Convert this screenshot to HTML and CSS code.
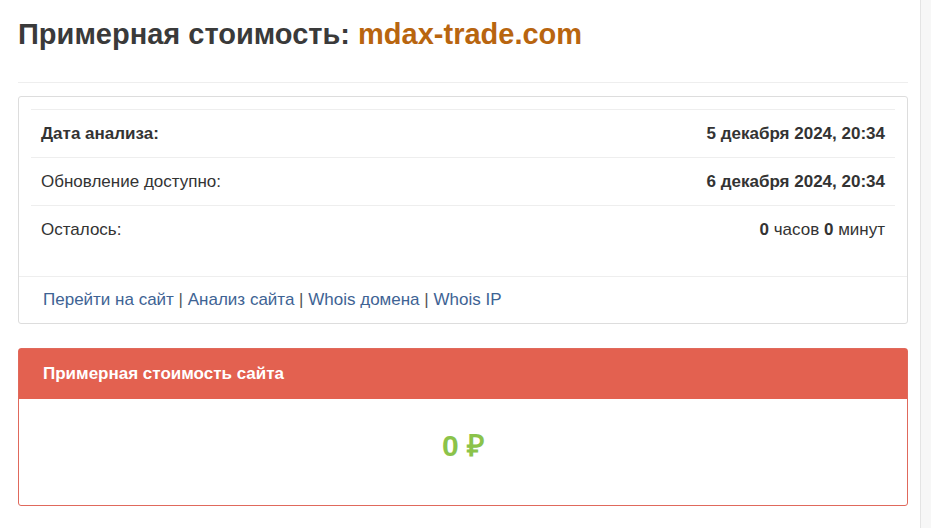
FILE: index.html
```html
<!DOCTYPE html>
<html lang="ru">
<head>
<meta charset="utf-8">
<title>Примерная стоимость: mdax-trade.com</title>
<link rel="stylesheet" href="styles.css">
</head>
<body>
<div class="page">
  <main class="main">
    <h1 class="title">Примерная стоимость: <span class="domain">mdax-trade.com</span></h1>
    <hr class="divider">
    <section class="panel">
      <div class="panel-body">
        <div class="row">
          <div class="label strong">Дата анализа:</div>
          <div class="value strong">5 декабря 2024, 20:34</div>
        </div>
        <div class="row">
          <div class="label">Обновление доступно:</div>
          <div class="value strong">6 декабря 2024, 20:34</div>
        </div>
        <div class="row">
          <div class="label">Осталось:</div>
          <div class="value"><b>0</b> часов <b>0</b> минут</div>
        </div>
      </div>
      <div class="panel-footer">
        <a href="#" class="link">Перейти на сайт</a> | <a href="#" class="link">Анализ сайта</a> | <a href="#" class="link">Whois домена</a> | <a href="#" class="link">Whois IP</a>
      </div>
    </section>
    <section class="panel panel-red">
      <div class="panel-heading">Примерная стоимость сайта</div>
      <div class="price-body">
        <span class="price">0 ₽</span>
      </div>
    </section>
  </main>
  <div class="side"></div>
</div>
</body>
</html>
```
FILE: styles.css
```css
html, body {
  margin: 0;
  padding: 0;
  height: 100%;
}
body {
  font-family: "Liberation Sans", Arial, sans-serif;
  color: #333;
  background: #f7f7f7;
}
.page {
  display: flex;
  min-height: 100%;
}
.main {
  width: 890px;
  padding: 0 12px 0 18px;
  background: #fff;
  border-right: 1px solid #e4e4e4;
  min-height: 528px;
  box-sizing: content-box;
}
.side {
  flex: 1;
}
.title {
  margin: 0;
  padding-top: 18px;
  font-size: 29px;
  line-height: 33px;
  font-weight: bold;
  color: #3a3a3a;
}
.domain {
  color: #b8650f;
}
.divider {
  margin: 31px 0 13px;
  border: 0;
  border-top: 1px solid #eeeeee;
  height: 0;
}
.panel {
  border: 1px solid #dddddd;
  border-radius: 3px;
  background: #fff;
  margin-bottom: 24px;
}
.panel-body {
  padding: 12px 12px 23px;
}
.row {
  display: flex;
  justify-content: space-between;
  align-items: center;
  border-top: 1px solid #eeeeee;
  height: 47px;
  padding: 0 10px;
  font-size: 17px;
}
.strong, .value b {
  font-weight: bold;
}
.panel-footer {
  border-top: 1px solid #eeeeee;
  height: 46px;
  padding: 0 24px;
  display: flex;
  align-items: center;
  font-size: 17px;
  color: #555;
  white-space: pre;
}
.link {
  color: #3e6394;
  text-decoration: none;
}
.panel-red {
  border-color: #e0695c;
  border-radius: 3px;
}
.panel-heading {
  background: #e36150;
  color: #fff;
  font-weight: bold;
  font-size: 17px;
  height: 50px;
  display: flex;
  align-items: center;
  padding: 0 24px;
}
.price-body {
  height: 90px;
  padding-bottom: 16px;
  display: flex;
  align-items: center;
  justify-content: center;
}
.price {
  color: #8bc34a;
  font-weight: bold;
  font-size: 30px;
}
```
